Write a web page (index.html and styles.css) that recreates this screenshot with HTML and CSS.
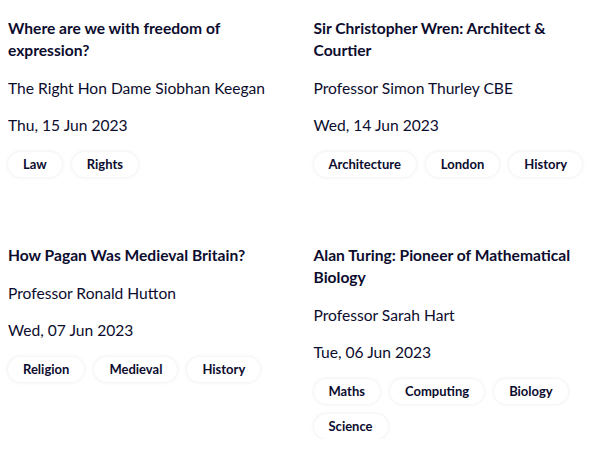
FILE: index.html
```html
<!DOCTYPE html>
<html>
<head>
<meta charset="utf-8">
<link rel="stylesheet" href="styles.css">
</head>
<body>
<div class="grid">
  <div class="card">
    <h3 class="title">Where are we with freedom of expression?</h3>
    <p class="author">The Right Hon Dame Siobhan Keegan</p>
    <p class="date">Thu, 15 Jun 2023</p>
    <div class="tags"><span class="tag">Law</span><span class="tag">Rights</span></div>
  </div>
  <div class="card">
    <h3 class="title">Sir Christopher Wren: Architect &amp; Courtier</h3>
    <p class="author">Professor Simon Thurley CBE</p>
    <p class="date">Wed, 14 Jun 2023</p>
    <div class="tags"><span class="tag">Architecture</span><span class="tag">London</span><span class="tag">History</span></div>
  </div>
  <div class="card">
    <h3 class="title">How Pagan Was Medieval Britain?</h3>
    <p class="author">Professor Ronald Hutton</p>
    <p class="date">Wed, 07 Jun 2023</p>
    <div class="tags"><span class="tag">Religion</span><span class="tag">Medieval</span><span class="tag">History</span></div>
  </div>
  <div class="card">
    <h3 class="title">Alan Turing: Pioneer of Mathematical Biology</h3>
    <p class="author">Professor Sarah Hart</p>
    <p class="date">Tue, 06 Jun 2023</p>
    <div class="tags"><span class="tag">Maths</span><span class="tag">Computing</span><span class="tag">Biology</span><span class="tag">Science</span></div>
  </div>
</div>
</body>
</html>
```
FILE: styles.css
```css
body {
  margin: 0;
  padding: 17px 8px 0 8px;
  background: #fff;
  font-family: "Lato", "Open Sans", sans-serif;
  color: #0c0c2e;
}
.grid {
  display: grid;
  grid-template-columns: 1fr 1fr;
  column-gap: 32px;
  row-gap: 67px;
}
.title {
  margin: 0;
  font-size: 15.6px;
  font-weight: 700;
  line-height: 22px;
}
.author {
  margin: 17px 0 0;
  font-size: 15.6px;
  line-height: 20px;
}
.date {
  margin: 17px 0 0;
  font-size: 15.6px;
  line-height: 20px;
}
.tags {
  margin-top: 17px;
  display: flex;
  flex-wrap: wrap;
  gap: 10px;
}
.tag {
  display: inline-block;
  padding: 0 15px;
  height: 25px;
  line-height: 25px;
  border-radius: 13px;
  background: #fff;
  font-size: 13px;
  font-weight: 700;
  box-shadow: 0 0 4px rgba(0, 0, 0, 0.09);
}
```
